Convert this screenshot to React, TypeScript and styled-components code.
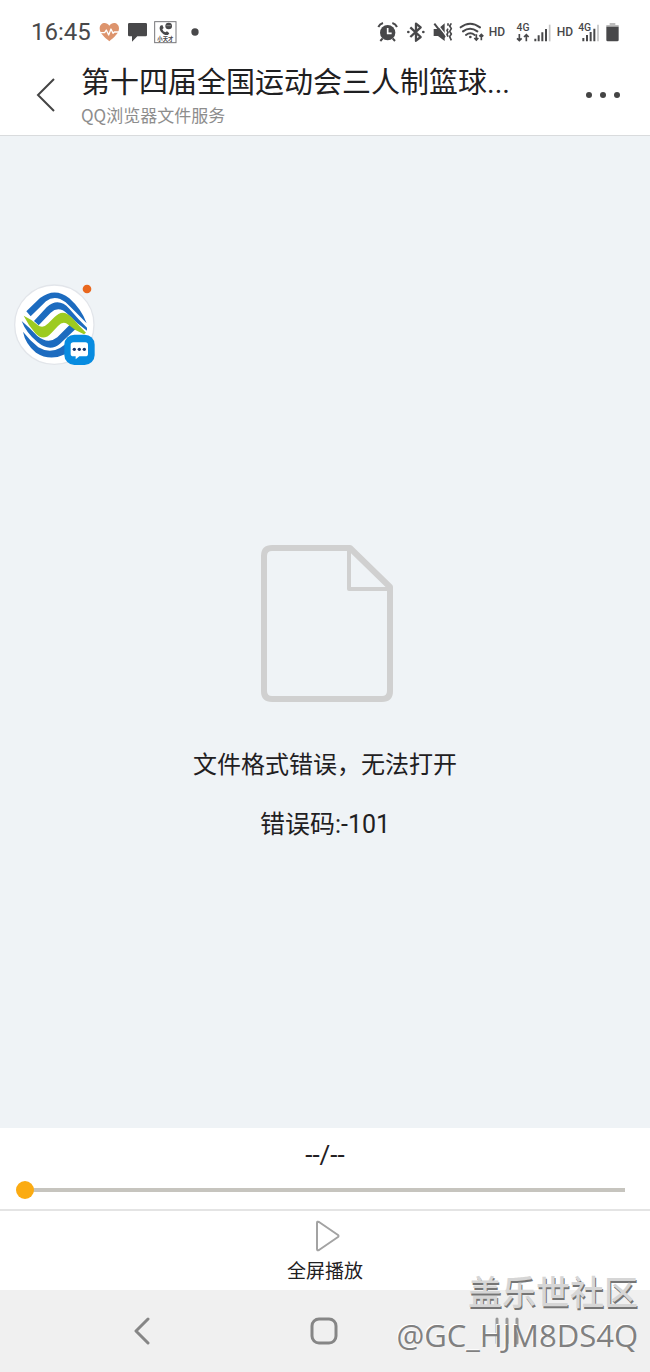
import React from "react";
import styled, { createGlobalStyle } from "styled-components";

const GlobalStyle = createGlobalStyle`
  *, *::before, *::after { box-sizing: border-box; }
  body {
    margin: 0;
    background: #fff;
    color: #1f2022;
    font-family: Roboto, "Noto Sans CJK SC", sans-serif;
  }
  button {
    border: 0;
    padding: 0;
    background: none;
    color: inherit;
    font: inherit;
    cursor: pointer;
  }
  svg { display: block; }
  h1, p { margin: 0; font-weight: 400; }
`;

const Screen = styled.div`
  position: relative;
  display: flex;
  flex-direction: column;
  min-height: 100vh;
  overflow: hidden;
`;

const StatusBar = styled.div`
  display: flex;
  align-items: center;
  justify-content: space-between;
  height: 64px;
  padding: 0 30px 0 31px;
  color: #48484a;
`;

const StatusGroup = styled.div`
  display: flex;
  align-items: center;
  gap: 4px;
`;

const Clock = styled.time`
  margin-right: 3px;
  font-size: 24px;
  line-height: 28px;
`;

const HdLabel = styled.span`
  width: 18px;
  text-align: center;
  font-size: 12px;
  line-height: 16px;
  font-weight: 500;
`;

const Header = styled.header`
  display: flex;
  align-items: center;
  height: 72px;
  padding: 0 27px 9px 26px;
  border-bottom: 1px solid #d9dbdd;
`;

const IconButton = styled.button`
  display: flex;
  flex: none;
  align-items: center;
  justify-content: center;
  width: 40px;
  height: 40px;
`;

const HeaderText = styled.div`
  flex: 1;
  min-width: 0;
  padding-left: 15px;
`;

const Title = styled.h1`
  white-space: nowrap;
  font-size: 29px;
  line-height: 38px;
`;

const Subtitle = styled.p`
  color: #8d8d8d;
  font-family: "Noto Sans CJK SC", sans-serif;
  font-size: 17px;
  line-height: 25px;
`;

const Viewer = styled.main`
  position: relative;
  display: flex;
  flex: 1;
  flex-direction: column;
  align-items: center;
  padding: 408px 16px 48px;
  background: #eff3f6;
`;

const FloatingBubble = styled.button`
  position: absolute;
  top: 146px;
  left: 14px;
`;

const ErrorText = styled.p<{ $code?: boolean }>`
  margin-top: ${(p) => (p.$code ? 24 : 43)}px;
  font-size: ${(p) => (p.$code ? 25 : 24)}px;
  line-height: 36px;
  text-align: center;
`;

const Player = styled.section`
  display: flex;
  flex-direction: column;
  height: 83px;
  padding: 10px 16px 0;
  border-bottom: 2px solid #e4e4e4;
`;

const PlayTime = styled.p`
  font-size: 26px;
  line-height: 34px;
  text-align: center;
`;

const Seek = styled.input`
  appearance: none;
  width: 100%;
  height: 18px;
  margin: 9px 0 0;
  background: linear-gradient(#c6c4be, #c6c4be) center / calc(100% - 18px) 4px no-repeat;
  cursor: pointer;

  &::-webkit-slider-thumb {
    appearance: none;
    width: 18px;
    height: 18px;
    border-radius: 50%;
    background: #fbab12;
  }
`;

const Actions = styled.div`
  display: flex;
  justify-content: center;
  height: 79px;
`;

const PlayButton = styled.button`
  display: flex;
  flex-direction: column;
  align-items: center;
  padding-top: 8px;
  font-size: 19px;
  line-height: 28px;
`;

const PlayIcon = styled.svg`
  margin-bottom: 5px;
`;

const NavBar = styled.nav`
  display: flex;
  align-items: center;
  justify-content: space-around;
  height: 82px;
  padding: 0 52px 0 51px;
  background: #f0f0f0;
`;

const Watermark = styled.div`
  position: absolute;
  right: 12px;
  bottom: 15px;
  text-align: right;
  white-space: nowrap;
  pointer-events: none;
`;

const Community = styled.p`
  color: #d6d6d6;
  font-family: "Noto Sans CJK SC", sans-serif;
  font-size: 34px;
  line-height: 44px;
  font-weight: 500;
  text-shadow: 1px 2px 0 #757575;
`;

const UserName = styled.p`
  color: #808080;
  font-family: "Open Sans", "Noto Sans", sans-serif;
  font-size: 31px;
  line-height: 44px;
  font-weight: 400;
  text-shadow: -1px -1px 0 #fff;
`;

type StatusIconProps = { box: string; width?: number; children: React.ReactNode };

const StatusIcon = ({ box, width = 24, children }: StatusIconProps) => (
  <svg width={width} height={24} viewBox={box} fill="none" stroke="none" aria-hidden="true">
    {children}
  </svg>
);

const INK = "#48484a";

const Notifications = () => (
  <>
    <StatusIcon box="294 60 72 72">
      <path d="M328 124C315 113 299 101 299 85c0-17 20-22 29-8 9-14 29-9 29 8 0 16-16 28-29 39Z" fill="#dd946d" />
      <path d="M299 98h15l5-8 7 15 7-18 6 13 4-4h14" stroke="#fff" strokeWidth="4" strokeLinejoin="round" />
    </StatusIcon>
    <StatusIcon box="378 60 72 72">
      <path d="M388 69h49q4 0 4 4v32q0 4-4 4h-25l-16 16v-16h-8q-4 0-4-4V73q0-4 4-4Z" fill={INK} />
    </StatusIcon>
    <StatusIcon box="462 60 72 72">
      <rect x="464" y="65" width="64" height="63" fill="#fff" stroke="#77777a" strokeWidth="3" />
      <path d="M481 77l6-2 4 9-4 4q2 7 9 9l5-3 7 6-4 5c-15 3-31-17-23-28Z" fill={INK} />
      <circle cx="506" cy="78" r="10" fill={INK} />
      <path d="M499 77h14" stroke="#aaa" strokeWidth="2" />
      <text x="496" y="122" textAnchor="middle" fontSize="16" fontWeight="700" fill={INK}>小天才</text>
    </StatusIcon>
    <StatusIcon box="546 60 72 72">
      <circle cx="585" cy="96" r="11" fill={INK} />
    </StatusIcon>
  </>
);

const AlarmIcon = () => (
  <StatusIcon box="42 30 72 72">
    <circle cx="83" cy="68" r="23" fill={INK} />
    <path d="M83 54v16h12" stroke="#fff" strokeWidth="5" />
    <path d="M55 51q4-9 14-12M111 51q-4-9-14-12M68 85l-7 8M98 85l7 8" stroke={INK} strokeWidth="6" />
  </StatusIcon>
);

const BluetoothIcon = () => (
  <StatusIcon box="126 30 72 72">
    <path d="M151 52l31 29-14 11V41l14 11-31 29" stroke={INK} strokeWidth="7" strokeLinejoin="round" />
    <circle cx="145" cy="66" r="4" fill={INK} />
    <circle cx="190" cy="66" r="4" fill={INK} />
  </StatusIcon>
);

const MuteIcon = () => (
  <StatusIcon box="210 30 72 72">
    <path d="M221 57h13l20-17v53l-20-15h-13Z" fill={INK} />
    <path d="M226 36l30 38" stroke="#fff" strokeWidth="4" />
    <path d="M223 41l32 41" stroke={INK} strokeWidth="6" />
    <path d="M264 40v7M274 40l-5 8 5 8-5 8 5 8-5 8 5 11M264 56l-3 5 3 6-3 6 3 7" stroke={INK} strokeWidth="5" strokeLinejoin="round" />
  </StatusIcon>
);

const WifiIcon = () => (
  <StatusIcon box="294 30 78 72" width={26}>
    <path d="M302 52q28-22 58 0M309 64q21-16 43 0M318 75q13-10 26 0" stroke={INK} strokeWidth="6" strokeLinecap="round" />
    <circle cx="331" cy="81" r="4" fill={INK} />
    <path d="M349 73v17m-6-6l6 6 6-6M364 91V73m-6 6l6-6 6 6" stroke={INK} strokeWidth="5" />
  </StatusIcon>
);

const DataIcon = () => (
  <StatusIcon box="450 30 60 72" width={20}>
    <text x="489" y="64" textAnchor="middle" fontSize="31" fontWeight="500" fill={INK}>4G</text>
    <path d="M478 72v20m-7-7l7 7 7-7M499 94V74m-7 7l7-7 7 7" stroke={INK} strokeWidth="5" />
  </StatusIcon>
);

const SignalIcon = () => (
  <StatusIcon box="522 30 54 72" width={18}>
    <path d="M526 94V86M536 94V76M547 94V67M558 94V57" stroke={INK} strokeWidth="6" />
    <path d="M569 94V44" stroke="#c4c4c4" strokeWidth="5" />
  </StatusIcon>
);

const DataSignalIcon = () => (
  <StatusIcon box="654 30 72 72">
    <text x="674" y="64" textAnchor="middle" fontSize="31" fontWeight="500" fill={INK}>4G</text>
    <path d="M670 94V84M681 94V75M692 94V66M703 94V56" stroke={INK} strokeWidth="6" />
    <path d="M714 94V44" stroke="#c4c4c4" strokeWidth="5" />
  </StatusIcon>
);

const BatteryIcon = () => (
  <StatusIcon box="738 30 42 72" width={14}>
    <path d="M739 51v-6h10v-6h17v6h10v6Z" fill="#bdbdbd" />
    <path d="M739 50h37v40q0 4-4 4h-29q-4 0-4-4Z" fill={INK} />
  </StatusIcon>
);

const CarrierLogo = () => (
  <svg width="84" height="86" viewBox="42 36 252 258" fill="none" aria-hidden="true">
    <circle cx="163" cy="164" r="119" fill="#fff" stroke="#e2e5ea" strokeWidth="4" />
    <g fill="#1c6bbf">
      <path d="M79 124L120 84Q165 50 208 85 245 118 260 160 225 124 197 97 165 72 138 94L92 139Z" />
      <path d="M102 153L140 112Q175 80 208 116 235 148 261 173L261 182Q230 160 202 131 176 106 152 128L116 166Z" />
      <path d="M65 153Q90 174 112 198 145 224 172 202L211 163 226 178 180 221Q150 247 113 217 78 188 65 153Z" />
      <path d="M69 185Q90 212 115 232 148 252 180 234L197 222V252Q150 275 108 248 76 222 69 185Z" />
    </g>
    <path d="M71 137Q95 148 112 164 128 178 145 160L163 142Q188 114 215 142 237 168 258 188L252 193Q225 182 205 164 190 150 174 168L155 188Q130 216 106 190 85 166 71 137Z" fill="#9dcb20" />
    <rect x="193" y="194" width="91" height="91" rx="30" fill="#078be0" />
    <path d="M220 217h36q8 0 8 8v26q0 8-8 8h-18l-11 9v-9h-7q-8 0-8-8v-26q0-8 8-8Z" fill="#fff" />
    <circle cx="223" cy="238" r="5" fill="#17356b" />
    <circle cx="238" cy="238" r="5" fill="#17356b" />
    <circle cx="253" cy="238" r="5" fill="#17356b" />
    <circle cx="261" cy="57" r="13" fill="#e9671d" />
  </svg>
);

export default function App() {
  return (
    <>
      <GlobalStyle />
      <Screen>
        <StatusBar>
          <StatusGroup>
            <Clock>16:45</Clock>
            <Notifications />
          </StatusGroup>
          <StatusGroup>
            <AlarmIcon />
            <BluetoothIcon />
            <MuteIcon />
            <WifiIcon />
            <HdLabel>HD</HdLabel>
            <DataIcon />
            <SignalIcon />
            <HdLabel>HD</HdLabel>
            <DataSignalIcon />
            <BatteryIcon />
          </StatusGroup>
        </StatusBar>

        <Header>
          <IconButton aria-label="返回">
            <svg width="20" height="36" viewBox="0 0 20 36" fill="none" stroke="#444" strokeWidth="2">
              <path d="M18 2 2 18l16 16" />
            </svg>
          </IconButton>
          <HeaderText>
            <Title>第十四届全国运动会三人制篮球...</Title>
            <Subtitle>QQ浏览器文件服务</Subtitle>
          </HeaderText>
          <IconButton aria-label="更多">
            <svg width="36" height="8" viewBox="0 0 36 8" fill="#444">
              <circle cx="4" cy="4" r="3" />
              <circle cx="18" cy="4" r="3" />
              <circle cx="32" cy="4" r="3" />
            </svg>
          </IconButton>
        </Header>

        <Viewer>
          <FloatingBubble aria-label="消息">
            <CarrierLogo />
          </FloatingBubble>
          <svg width="138" height="160" viewBox="0 0 138 160" fill="none" stroke="#d0d0d0" strokeLinejoin="round" aria-hidden="true">
            <path d="M94 4H16Q8 4 8 12v135q0 8 8 8h110q8 0 8-8V43Z" strokeWidth="6" />
            <path d="M93 5v40h41" strokeWidth="4" />
          </svg>
          <ErrorText>文件格式错误，无法打开</ErrorText>
          <ErrorText $code>错误码:-101</ErrorText>
        </Viewer>

        <Player>
          <PlayTime>--/--</PlayTime>
          <Seek type="range" min={0} max={100} defaultValue={0} aria-label="播放进度" />
        </Player>

        <Actions>
          <PlayButton>
            <PlayIcon width="30" height="34" viewBox="0 0 30 34" fill="none" stroke="#a3a3a3" strokeWidth="2" strokeLinejoin="round">
              <path d="M7 4v26q0 2 2 1l19-13q1-1 0-2L9 3Q7 2 7 4Z" />
            </PlayIcon>
            全屏播放
          </PlayButton>
        </Actions>

        <NavBar>
          <IconButton aria-label="后退">
            <svg width="18" height="28" viewBox="0 0 18 28" fill="none" stroke="#868686" strokeWidth="3" strokeLinecap="round" strokeLinejoin="round">
              <path d="M15 2 3 14l12 12" />
            </svg>
          </IconButton>
          <IconButton aria-label="主屏幕">
            <svg width="28" height="28" viewBox="0 0 28 28" fill="none" stroke="#868686" strokeWidth="3">
              <rect x="2" y="2" width="24" height="24" rx="7" />
            </svg>
          </IconButton>
          <IconButton aria-label="最近任务">
            <svg width="26" height="28" viewBox="0 0 26 28" fill="none" stroke="#999" strokeWidth="3" strokeLinecap="round">
              <path d="M3 2v24M13 2v24M23 2v24" />
            </svg>
          </IconButton>
        </NavBar>

        <Watermark>
          <Community>盖乐世社区</Community>
          <UserName>@GC_HJM8DS4Q</UserName>
        </Watermark>
      </Screen>
    </>
  );
}
